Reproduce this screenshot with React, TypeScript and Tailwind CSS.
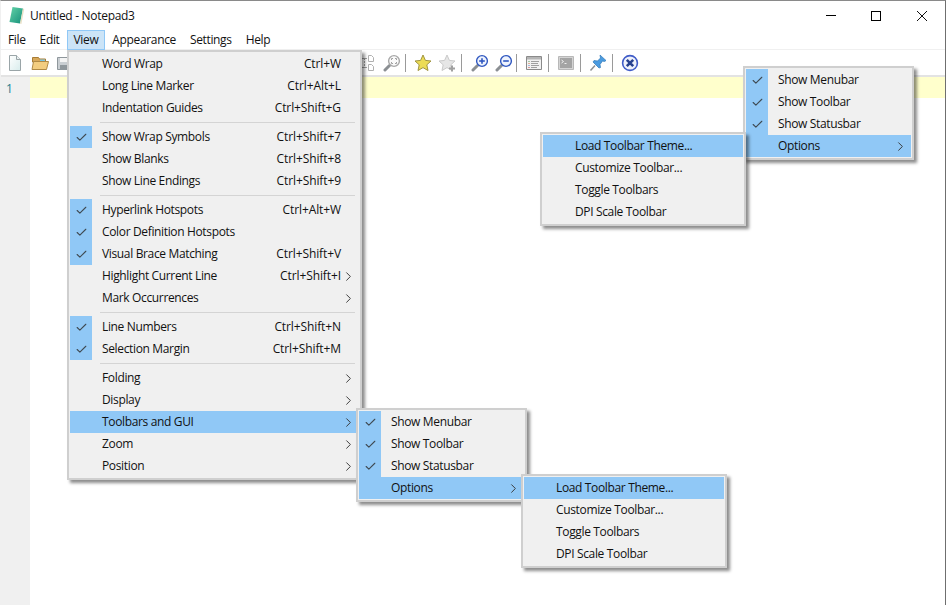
import React from 'react';
import { Check, ChevronRight } from 'lucide-react';

type Row = {
  label?: string;
  keys?: string;
  checked?: boolean;
  arrow?: boolean;
  active?: boolean;
  sep?: boolean;
};

const viewItems: Row[] = [
  { label: 'Word Wrap', keys: 'Ctrl+W' },
  { label: 'Long Line Marker', keys: 'Ctrl+Alt+L' },
  { label: 'Indentation Guides', keys: 'Ctrl+Shift+G' },
  { sep: true },
  { label: 'Show Wrap Symbols', keys: 'Ctrl+Shift+7', checked: true },
  { label: 'Show Blanks', keys: 'Ctrl+Shift+8' },
  { label: 'Show Line Endings', keys: 'Ctrl+Shift+9' },
  { sep: true },
  { label: 'Hyperlink Hotspots', keys: 'Ctrl+Alt+W', checked: true },
  { label: 'Color Definition Hotspots', checked: true },
  { label: 'Visual Brace Matching', keys: 'Ctrl+Shift+V', checked: true },
  { label: 'Highlight Current Line', keys: 'Ctrl+Shift+I', arrow: true },
  { label: 'Mark Occurrences', arrow: true },
  { sep: true },
  { label: 'Line Numbers', keys: 'Ctrl+Shift+N', checked: true },
  { label: 'Selection Margin', keys: 'Ctrl+Shift+M', checked: true },
  { sep: true },
  { label: 'Folding', arrow: true },
  { label: 'Display', arrow: true },
  { label: 'Toolbars and GUI', arrow: true, active: true },
  { label: 'Zoom', arrow: true },
  { label: 'Position', arrow: true },
];

const guiItems: Row[] = [
  { label: 'Show Menubar', checked: true },
  { label: 'Show Toolbar', checked: true },
  { label: 'Show Statusbar', checked: true },
  { label: 'Options', arrow: true, active: true },
];

const optionItems: Row[] = [
  { label: 'Load Toolbar Theme...', active: true },
  { label: 'Customize Toolbar...' },
  { label: 'Toggle Toolbars' },
  { label: 'DPI Scale Toolbar' },
];

function Menu({ items, className }: { items: Row[]; className: string }) {
  return (
    <div
      className={
        'absolute z-10 border-2 border-[#cfcfcf] bg-[#f0f0f0] p-px shadow-[3px_3px_3px_rgba(0,0,0,0.45)] ' +
        className
      }
    >
      {items.map((item, i) =>
        item.sep ? (
          <div key={i} className="flex h-[7px] items-center pl-[30px] pr-1">
            <div className="h-px w-full bg-[#d4d4d4]" />
          </div>
        ) : (
          <div key={i} className={'flex h-[22px] items-center ' + (item.active ? 'bg-[#90c8f6]' : '')}>
            <div
              className={
                'flex h-full w-[22px] shrink-0 items-center justify-center ' + (item.checked ? 'bg-[#90c8f6]' : '')
              }
            >
              {item.checked && <Check size={13} strokeWidth={2} className="text-[#3f4a52]" />}
            </div>
            <span className="ml-[10px] whitespace-nowrap">{item.label}</span>
            <span className="ml-auto whitespace-nowrap tracking-[-0.1px]">{item.keys}</span>
            <div className="flex w-[18px] shrink-0">
              {item.arrow && <ChevronRight size={15} strokeWidth={1.5} className="text-[#333]" />}
            </div>
          </div>
        ),
      )}
    </div>
  );
}

function NewFile() {
  return (
    <svg width="16" height="18" viewBox="0 0 16 18">
      <defs>
        <linearGradient id="page" x1="0" y1="0" x2="1" y2="1">
          <stop offset="0" stopColor="#ffffff" />
          <stop offset="1" stopColor="#d8ecec" />
        </linearGradient>
      </defs>
      <path d="M2.5 1.5h7l4 4v11h-11z" fill="url(#page)" stroke="#9aa5a8" />
      <path d="M9.5 1.5v4h4" fill="#e8eff0" stroke="#9aa5a8" />
    </svg>
  );
}

function OpenFolder() {
  return (
    <svg width="18" height="16" viewBox="0 0 18 16">
      <path d="M1.5 2.5h6l1 1.5h6v3h-13z" fill="#d7a85a" stroke="#a87c35" />
      <path d="M9 4.5h5v2H9z" fill="#7cc4e0" />
      <path d="M1 14.5l1.5-8h15l-2 8z" fill="#f3cd80" stroke="#b08a45" />
    </svg>
  );
}

function Save() {
  return (
    <svg width="16" height="16" viewBox="0 0 16 16">
      <path d="M1.5 2.5h13v12h-13z" fill="#c9ced2" stroke="#8f979c" />
      <path d="M4 3h8v4H4z" fill="#f4f4f4" />
      <path d="M4 10h8v4H4z" fill="#8f979c" />
    </svg>
  );
}

// only the right half of this icon shows past the open menu
function SplitPages() {
  return (
    <svg width="12" height="18" viewBox="0 0 12 18">
      <path d="M6.5 1.5h3l2 2v4h-5zM6.5 10.5h3l2 2v4h-5z" fill="#fff" stroke="#b0b0b0" />
      <path d="M0 4.5h5M0 13.5h5" stroke="#a0a0a0" strokeDasharray="2 1" />
      <path d="M2.5 4v10" stroke="#a0a0a0" strokeDasharray="2 1" />
    </svg>
  );
}

function Scope({ mark, color, glass }: { mark: 'plus' | 'minus' | 'frame'; color: string; glass: string }) {
  return (
    <svg width="18" height="18" viewBox="0 0 18 18">
      <path d="M6.5 11.5l-4.5 4.5" stroke="#8b8f93" strokeWidth="3" strokeLinecap="round" />
      <circle cx="11" cy="7" r="5.4" fill={glass} stroke={color} strokeWidth="1.4" />
      {mark === 'frame' && <path d="M8.5 6V4.5H10M12 4.5h1.5V6M13.5 8v1.5H12M10 9.5H8.5V8" fill="none" stroke="#a0a0a0" />}
      {mark !== 'frame' && <path d="M8.2 7h5.6" stroke={color} strokeWidth="1.6" />}
      {mark === 'plus' && <path d="M11 4.2v5.6" stroke={color} strokeWidth="1.6" />}
    </svg>
  );
}

const starPath = 'M9 1l2.4 5.4 5.6.6-4.2 3.8 1.2 5.7L9 13.6l-5 2.9 1.2-5.7L1 7l5.6-.6z';

function Star({ add }: { add?: boolean }) {
  return (
    <svg width="18" height="18" viewBox="0 0 18 18">
      <path d={starPath} fill={add ? '#e6e6e6' : '#ecdc55'} stroke={add ? '#cacaca' : '#a09540'} />
      {add && <path d="M11 14.5h6M14 11.5v6" stroke="#a0a0a0" strokeWidth="2" />}
    </svg>
  );
}

function ListWindow() {
  return (
    <svg width="16" height="14" viewBox="0 0 16 14">
      <path d="M.5.5h15v13H.5z" fill="#f2f2f2" stroke="#8a8a8a" />
      <path d="M1 1h14v2.5H1z" fill="#b5b5b5" />
      <path d="M2.5 5.5h1" stroke="#5aa05a" />
      <path d="M2.5 7.5h1" stroke="#d07040" />
      <path d="M2.5 9.5h1" stroke="#5a80c0" />
      <path d="M2.5 11.5h1" stroke="#c04040" />
      <path d="M5 5.5h8M5 7.5h7M5 9.5h8M5 11.5h6" stroke="#a0a0a0" />
    </svg>
  );
}

function Terminal() {
  return (
    <svg width="16" height="14" viewBox="0 0 16 14">
      <path d="M.5.5h15v13H.5z" fill="#d4d4d4" stroke="#b8b8b8" />
      <path d="M2 2h12v10H2z" fill="#a4a4a4" />
      <path d="M3.5 4l2 1.5-2 1.5M6.5 7.5h2" fill="none" stroke="#f0f0f0" />
    </svg>
  );
}

function Pin() {
  return (
    <svg width="18" height="18" viewBox="0 0 18 18">
      <path d="M6 11.5L1.5 16.5" stroke="#8b8f93" strokeWidth="1.5" />
      <path d="M11 1l6 5.5-1.5 1-2-.5-2.5 3.5.5 3L10 14 4 8l1-1.5 3.5.5L11.5 4z" fill="#4a9be0" stroke="#2f78b8" strokeWidth=".7" />
    </svg>
  );
}

function CloseRound() {
  return (
    <svg width="18" height="18" viewBox="0 0 18 18">
      <circle cx="9" cy="9" r="7.4" fill="#eef1fb" stroke="#3f5cc8" strokeWidth="1.6" />
      <path d="M5.8 5.8l6.4 6.4M12.2 5.8l-6.4 6.4" stroke="#26418f" strokeWidth="2.6" />
    </svg>
  );
}

function Sep({ className }: { className: string }) {
  return <div className={'h-[18px] w-px shrink-0 bg-[#9a9a9a] ' + className} />;
}

export default function App() {
  return (
    <div className="relative flex h-[605px] w-[946px] flex-col overflow-hidden border-t border-r border-l border-t-[#8a8a8a] border-r-[#6f6f6f] border-l-[#f0f0f0] bg-white font-['Open_Sans','Noto_Sans',sans-serif] text-[12px] tracking-[-0.35px] text-[#111]">
      {/* title bar */}
      <div className="flex h-[29px] shrink-0 items-center">
        <svg width="17" height="19" viewBox="0 0 17 19" className="ml-[7px]">
          <defs>
            <linearGradient id="book" x1="0" y1="0" x2="1" y2="1">
              <stop offset="0" stopColor="#63d3a8" />
              <stop offset="1" stopColor="#168f7a" />
            </linearGradient>
          </defs>
          <path d="M4.5 1l10.5 1.5-3 15-10.5-1.5z" fill="url(#book)" />
          <path d="M12 17.5L15 2.5l1.2.6-2.8 14.9z" fill="#e8dfc4" />
        </svg>
        <span className="ml-[5px] tracking-[-0.3px]">Untitled - Notepad3</span>
        <div className="ml-auto flex items-center">
          <div className="h-px w-[10px] bg-black" />
          <div className="ml-[35px] h-[10px] w-[10px] border border-black" />
          <svg width="12" height="12" viewBox="0 0 12 12" className="ml-[35px] mr-[17px]">
            <path d="M1 1l10 10M11 1L1 11" stroke="#111" strokeWidth="1" />
          </svg>
        </div>
      </div>

      {/* menu bar */}
      <div className="flex h-[20px] shrink-0 items-center border-b border-[#f0f0f0] pl-px">
        <span className="pl-[6px] pr-[7px]">File</span>
        <span className="px-[7px]">Edit</span>
        <span className="flex h-[20px] items-center border border-[#90c8f6] bg-[#cce4f7] px-[6px]">View</span>
        <span className="px-[7px]">Appearance</span>
        <span className="pl-[7px] pr-[7px]">Settings</span>
        <span className="px-[7px]">Help</span>
      </div>

      {/* toolbar */}
      <div className="flex h-[27px] shrink-0 items-center border-b-2 border-[#e3e3e3] pl-[6px]">
        <NewFile />
        <div className="ml-[8px]">
          <OpenFolder />
        </div>
        <div className="ml-[7px]">
          <Save />
        </div>
        <div className="ml-[290px]">
          <SplitPages />
        </div>
        <div className="ml-[9px]">
          <Scope mark="frame" color="#a8a8a8" glass="#fafafa" />
        </div>
        <Sep className="ml-[4px]" />
        <div className="ml-[8px]">
          <Star />
        </div>
        <div className="ml-[6px]">
          <Star add />
        </div>
        <Sep className="ml-[5px]" />
        <div className="ml-[9px]">
          <Scope mark="plus" color="#2f57c0" glass="#eef3fd" />
        </div>
        <div className="ml-[6px]">
          <Scope mark="minus" color="#2f57c0" glass="#eef3fd" />
        </div>
        <Sep className="ml-[3px]" />
        <div className="ml-[9px]">
          <ListWindow />
        </div>
        <Sep className="ml-[6px]" />
        <div className="ml-[9px]">
          <Terminal />
        </div>
        <Sep className="ml-[6px]" />
        <div className="ml-[8px]">
          <Pin />
        </div>
        <Sep className="ml-[5px]" />
        <div className="ml-[8px]">
          <CloseRound />
        </div>
      </div>

      {/* editor */}
      <div className="flex min-h-0 flex-1">
        <div className="w-[29px] shrink-0 bg-[#f0f0f0] pl-[5px] pt-[3px] font-medium text-[#1f7f8f]">1</div>
        <div className="min-w-0 flex-1">
          <div className="h-[21px] bg-[#ffffcc]" />
        </div>
      </div>

      <Menu items={viewItems} className="left-[66px] top-[49px] w-[295px]" />
      <Menu items={guiItems} className="left-[355px] top-[407px] w-[171px]" />
      <Menu items={optionItems} className="left-[520px] top-[473px] w-[206px]" />
      <Menu items={guiItems} className="left-[742px] top-[65px] w-[171px]" />
      <Menu items={optionItems} className="left-[539px] top-[131px] w-[206px]" />
    </div>
  );
}
